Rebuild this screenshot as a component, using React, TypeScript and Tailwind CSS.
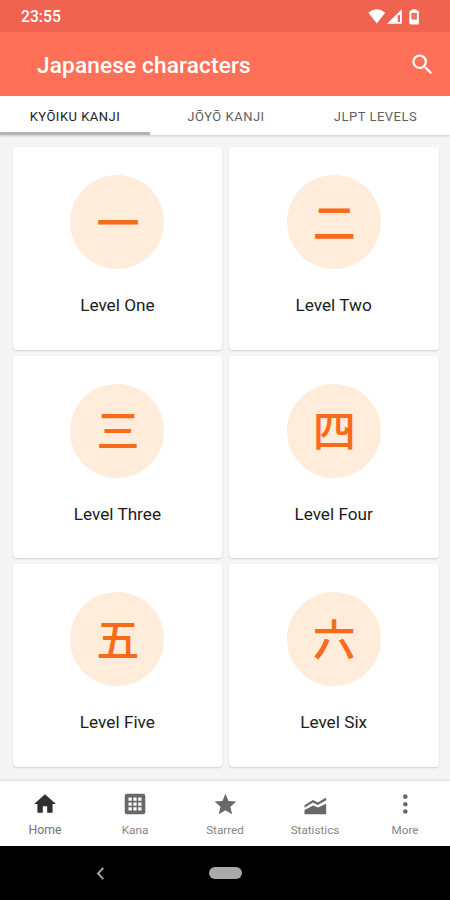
import React from "react";

const levels = [
  { kanji: "一", label: "Level One" },
  { kanji: "二", label: "Level Two" },
  { kanji: "三", label: "Level Three" },
  { kanji: "四", label: "Level Four" },
  { kanji: "五", label: "Level Five" },
  { kanji: "六", label: "Level Six" },
];

function StatusBar() {
  return (
    <div className="flex h-8 items-center justify-between bg-[#f06350] pl-[21px] pr-[31px] text-white">
      <span className="pt-0.5 text-[15.7px] leading-none font-medium">23:55</span>
      <svg className="h-8 w-[51px]" viewBox="368 0 51 32" fill="#fff">
        <path d="M368.4 12.700Q376.800 5.800 385.200 12.700L376.800 23.600Z" />
        <path fillRule="evenodd" d="M401.800 9.300V23.800H387Z M397.800 15.200V22H400V15.200Z" />
        <path
          fillRule="evenodd"
          d="M412 9.200h4.300v1.400h1.300q1.300 0 1.300 1.300v11.300q0 1.300-1.300 1.300h-6.900q-1.300 0-1.300-1.300V11.900q0-1.300 1.300-1.300h1.300Z M411.500 13v6.500h5.300V13Z"
        />
        <path d="M413.500 14.300h1.300v3.700h-1.300z" opacity=".35" />
      </svg>
    </div>
  );
}

function AppBar() {
  return (
    <header className="flex h-16 items-center justify-between bg-[#ff7058] pl-[37px] pr-[14px] text-white">
      <h1 className="pt-[5px] text-[22.600px] leading-none font-medium tracking-[0.15px]">Japanese characters</h1>
      <svg className="h-[27px] w-[27px]" viewBox="0 0 24 24" fill="currentColor">
        <path d="M15.500 14h-.79l-.28-.27A6.471 6.471 0 0 0 16 9.500 6.500 6.500 0 1 0 9.500 16c1.610 0 3.090-.59 4.230-1.570l.27.28v.79l5 4.990L20.490 19l-4.990-5zm-6 0C7.010 14 5 11.990 5 9.500S7.010 5 9.500 5 14 7.010 14 9.500 11.990 14 9.500 14z" />
      </svg>
    </header>
  );
}

function Tabs() {
  return (
    <nav className="grid h-[39px] grid-cols-3 bg-white text-center text-[13px] leading-[41px] tracking-[0.5px] text-[#5f5f5f] shadow-[0_1px_2px_rgba(0,0,0,0.18)]">
      <div className="h-[39px] border-b-3 border-[#b5b5b5] text-[#222]">KYŌIKU KANJI</div>
      <div className="pl-[2px]">JŌYŌ KANJI</div>
      <div className="pl-px">JLPT LEVELS</div>
    </nav>
  );
}

function LevelCard({ kanji, label }: { kanji: string; label: string }) {
  return (
    <div className="flex flex-col items-center rounded-[4px] bg-white pt-[28px] shadow-[0_1px_2px_rgba(0,0,0,0.16)]">
      <div className="flex h-[94px] w-[94px] items-center justify-center rounded-full bg-[#ffecdb] pb-[4px] pl-px">
        <span className="font-['Noto_Sans_CJK_JP',sans-serif] text-[43px] leading-none font-medium text-[#f96a1b]">
          {kanji}
        </span>
      </div>
      <span className="mt-[26px] text-[17.200px] leading-5 text-[#1c1c1c]">{label}</span>
    </div>
  );
}

function NavItem({ label, active, children }: { label: string; active?: boolean; children: React.ReactNode }) {
  return (
    <div className={active ? "flex flex-col items-center pt-[10px] text-[#303030]" : "flex flex-col items-center pt-[10px] text-[#686868]"}>
      <svg className="h-[26px] w-[26px]" viewBox="0 0 24 24" fill="currentColor">
        {children}
      </svg>
      <span className={active ? "mt-[5px] text-[12.200px] leading-4 text-[#707070]" : "mt-[5px] text-[11.700px] leading-4 text-[#858585]"}>{label}</span>
    </div>
  );
}

export default function App() {
  return (
    <div className="flex h-[900px] w-[450px] flex-col overflow-hidden bg-[#f5f5f5] font-[Roboto,sans-serif]">
      <StatusBar />
      <AppBar />
      <Tabs />
      <main className="grid flex-1 auto-rows-[202.500px] grid-cols-2 gap-x-[6.500px] gap-y-[6px] pr-[11.500px] pl-[12.500px] pt-[12px]">
        {levels.map((level) => (
          <LevelCard key={level.kanji} {...level} />
        ))}
      </main>
      <nav className="grid h-[65px] grid-cols-5 bg-white shadow-[0_-1px_2px_rgba(0,0,0,0.12)]">
        <NavItem label="Home" active>
          <path d="M10 20v-6h4v6h5v-8h3L12 3 2 12h3v8z" />
        </NavItem>
        <NavItem label="Kana">
          <path
            fillRule="evenodd"
            d="M4.500 2.500h15q2 0 2 2v15q0 2-2 2h-15q-2 0-2-2v-15q0-2 2-2zM6 6v3h3V6zm4.500 0v3h3V6zM15 6v3h3V6zM6 10.500v3h3v-3zm4.500 0v3h3v-3zm4.500 0v3h3v-3zM6 15v3h3v-3zm4.500 0v3h3v-3zm4.500 0v3h3v-3z"
          />
        </NavItem>
        <NavItem label="Starred">
          <path d="M12 17.270L18.180 21l-1.640-7.030L22 9.240l-7.190-.61L12 2 9.190 8.630 2 9.240l5.460 4.730L5.820 21z" transform="translate(0.4 0.500)" />
        </NavItem>
        <NavItem label="Statistics">
          <path d="M2 17.500L10 13.300l4.500 1.900L22 11.800V21.500H2zM2 13.200L9.800 8.300l4.400 2.300L22 6v2.500l-7.800 4.500-4.400-2.300L2 15.400z" transform="translate(0.3 0)" />
        </NavItem>
        <NavItem label="More">
          <circle cx="12.300" cy="5.200" r="2.100" />
          <circle cx="12.300" cy="12.200" r="2.100" />
          <circle cx="12.300" cy="19" r="2.100" />
        </NavItem>
      </nav>
      <div className="grid h-[54px] grid-cols-[100px_1fr_100px] items-center bg-black">
        <svg className="ml-[96px] h-[13px] w-[9px]" viewBox="0 0 9 14" fill="none" stroke="#aaa" strokeWidth="2">
          <path d="M7.500 1L1.800 7l5.700 6" />
        </svg>
        <div className="h-[12px] w-[33px] justify-self-center rounded-full bg-[#aaa]" />
      </div>
    </div>
  );
}
